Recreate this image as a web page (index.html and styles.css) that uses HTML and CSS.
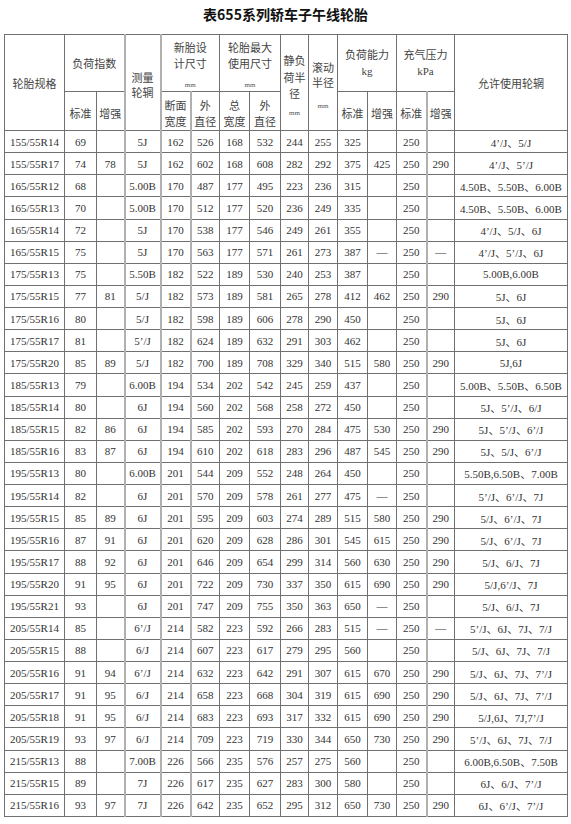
FILE: index.html
```html
<!DOCTYPE html>
<html lang="zh-CN">
<head>
<meta charset="utf-8">
<title>表655系列轿车子午线轮胎</title>
<link rel="stylesheet" href="styles.css">
</head>
<body>
<div class="page">
  <h1 class="title">表655系列轿车子午线轮胎</h1>
  <table class="tyre">
    <colgroup>
      <col class="c-spec"><col class="c-n32"><col class="c-n28"><col class="c-rim lt"><col class="c-w30 lt"><col class="c-w29 lt"><col class="c-w30"><col class="c-w31"><col class="c-w28"><col class="c-w29"><col class="c-w30"><col class="c-w29"><col class="c-w30"><col class="c-w28 lt"><col class="c-allow">
    </colgroup>
    <thead>
      <tr class="h1">
        <th rowspan="2" class="hd">轮胎规格</th>
        <th colspan="2" class="hd">负荷指数</th>
        <th rowspan="2" class="hd rimhd"><div class="stack l15"><span>测量</span><span>轮辋</span></div></th>
        <th colspan="2" class="hd top"><div class="stack l16"><span>新胎设</span><span>计尺寸</span><span class="mm">mm</span></div></th>
        <th colspan="2" class="hd top"><div class="stack l16"><span>轮胎最大</span><span>使用尺寸</span><span class="mm">mm</span></div></th>
        <th rowspan="2" class="hd top static"><div class="stack l165"><span>静负</span><span>荷半</span><span>径</span><span class="mm m5">mm</span></div></th>
        <th rowspan="2" class="hd top roll"><div class="stack l15"><span>滚动</span><span>半径</span><span class="mm m10">mm</span></div></th>
        <th colspan="2" class="hd"><div class="stack l17"><span>负荷能力</span><span class="unit">kg</span></div></th>
        <th colspan="2" class="hd"><div class="stack l17"><span>充气压力</span><span class="unit">kPa</span></div></th>
        <th rowspan="2" class="hd">允许使用轮辋</th>
      </tr>
      <tr class="h2">
        <th class="hd sub">标准</th>
        <th class="hd sub">增强</th>
        <th class="hd sub"><div class="stack l16"><span>断面</span><span>宽度</span></div></th>
        <th class="hd sub"><div class="stack l16"><span>外</span><span>直径</span></div></th>
        <th class="hd sub"><div class="stack l16"><span>总</span><span>宽度</span></div></th>
        <th class="hd sub"><div class="stack l16"><span>外</span><span>直径</span></div></th>
        <th class="hd sub">标准</th>
        <th class="hd sub">增强</th>
        <th class="hd sub">标准</th>
        <th class="hd sub">增强</th>
      </tr>
    </thead>
    <tbody>
      <tr><td>155/55R14</td><td>69</td><td></td><td>5J</td><td>162</td><td>526</td><td>168</td><td>532</td><td>244</td><td>255</td><td>325</td><td></td><td>250</td><td></td><td>4’/J、5/J</td></tr>
      <tr><td>155/55R17</td><td>74</td><td>78</td><td>5J</td><td>162</td><td>602</td><td>168</td><td>608</td><td>282</td><td>292</td><td>375</td><td>425</td><td>250</td><td>290</td><td>4’/J、5’/J</td></tr>
      <tr><td>165/55R12</td><td>68</td><td></td><td>5.00B</td><td>170</td><td>487</td><td>177</td><td>495</td><td>223</td><td>236</td><td>315</td><td></td><td>250</td><td></td><td>4.50B、5.50B、6.00B</td></tr>
      <tr><td>165/55R13</td><td>70</td><td></td><td>5.00B</td><td>170</td><td>512</td><td>177</td><td>520</td><td>236</td><td>249</td><td>335</td><td></td><td>250</td><td></td><td>4.50B、5.50B、6.00B</td></tr>
      <tr><td>165/55R14</td><td>72</td><td></td><td>5J</td><td>170</td><td>538</td><td>177</td><td>546</td><td>249</td><td>261</td><td>355</td><td></td><td>250</td><td></td><td>4’/J、5/J、6J</td></tr>
      <tr><td>165/55R15</td><td>75</td><td></td><td>5J</td><td>170</td><td>563</td><td>177</td><td>571</td><td>261</td><td>273</td><td>387</td><td>—</td><td>250</td><td>—</td><td>4’/J、5’/J、6J</td></tr>
      <tr><td>175/55R13</td><td>75</td><td></td><td>5.50B</td><td>182</td><td>522</td><td>189</td><td>530</td><td>240</td><td>253</td><td>387</td><td></td><td>250</td><td></td><td>5.00B,6.00B</td></tr>
      <tr><td>175/55R15</td><td>77</td><td>81</td><td>5/J</td><td>182</td><td>573</td><td>189</td><td>581</td><td>265</td><td>278</td><td>412</td><td>462</td><td>250</td><td>290</td><td>5J、6J</td></tr>
      <tr><td>175/55R16</td><td>80</td><td></td><td>5/J</td><td>182</td><td>598</td><td>189</td><td>606</td><td>278</td><td>290</td><td>450</td><td></td><td>250</td><td></td><td>5J、6J</td></tr>
      <tr><td>175/55R17</td><td>81</td><td></td><td>5’/J</td><td>182</td><td>624</td><td>189</td><td>632</td><td>291</td><td>303</td><td>462</td><td></td><td>250</td><td></td><td>5J、6J</td></tr>
      <tr><td>175/55R20</td><td>85</td><td>89</td><td>5/J</td><td>182</td><td>700</td><td>189</td><td>708</td><td>329</td><td>340</td><td>515</td><td>580</td><td>250</td><td>290</td><td>5J,6J</td></tr>
      <tr><td>185/55R13</td><td>79</td><td></td><td>6.00B</td><td>194</td><td>534</td><td>202</td><td>542</td><td>245</td><td>259</td><td>437</td><td></td><td>250</td><td></td><td>5.00B、5.50B、6.50B</td></tr>
      <tr><td>185/55R14</td><td>80</td><td></td><td>6J</td><td>194</td><td>560</td><td>202</td><td>568</td><td>258</td><td>272</td><td>450</td><td></td><td>250</td><td></td><td>5J、5’/J、6/J</td></tr>
      <tr><td>185/55R15</td><td>82</td><td>86</td><td>6J</td><td>194</td><td>585</td><td>202</td><td>593</td><td>270</td><td>284</td><td>475</td><td>530</td><td>250</td><td>290</td><td>5J、5’/J、6’/J</td></tr>
      <tr><td>185/55R16</td><td>83</td><td>87</td><td>6J</td><td>194</td><td>610</td><td>202</td><td>618</td><td>283</td><td>296</td><td>487</td><td>545</td><td>250</td><td>290</td><td>5J、5/J、6’/J</td></tr>
      <tr><td>195/55R13</td><td>80</td><td></td><td>6.00B</td><td>201</td><td>544</td><td>209</td><td>552</td><td>248</td><td>264</td><td>450</td><td></td><td>250</td><td></td><td>5.50B,6.50B、7.00B</td></tr>
      <tr><td>195/55R14</td><td>82</td><td></td><td>6J</td><td>201</td><td>570</td><td>209</td><td>578</td><td>261</td><td>277</td><td>475</td><td>—</td><td>250</td><td></td><td>5’/J、6’/J、7J</td></tr>
      <tr><td>195/55R15</td><td>85</td><td>89</td><td>6J</td><td>201</td><td>595</td><td>209</td><td>603</td><td>274</td><td>289</td><td>515</td><td>580</td><td>250</td><td>290</td><td>5/J、6’/J、7J</td></tr>
      <tr><td>195/55R16</td><td>87</td><td>91</td><td>6J</td><td>201</td><td>620</td><td>209</td><td>628</td><td>286</td><td>301</td><td>545</td><td>615</td><td>250</td><td>290</td><td>5/J、6’/J、7J</td></tr>
      <tr><td>195/55R17</td><td>88</td><td>92</td><td>6J</td><td>201</td><td>646</td><td>209</td><td>654</td><td>299</td><td>314</td><td>560</td><td>630</td><td>250</td><td>290</td><td>5/J、6/J、7J</td></tr>
      <tr><td>195/55R20</td><td>91</td><td>95</td><td>6J</td><td>201</td><td>722</td><td>209</td><td>730</td><td>337</td><td>350</td><td>615</td><td>690</td><td>250</td><td>290</td><td>5/J,6’/J、7J</td></tr>
      <tr><td>195/55R21</td><td>93</td><td></td><td>6J</td><td>201</td><td>747</td><td>209</td><td>755</td><td>350</td><td>363</td><td>650</td><td>—</td><td>250</td><td></td><td>5/J、6/J、7J</td></tr>
      <tr><td>205/55R14</td><td>85</td><td></td><td>6’/J</td><td>214</td><td>582</td><td>223</td><td>592</td><td>266</td><td>283</td><td>515</td><td>—</td><td>250</td><td>—</td><td>5’/J、6J、7J、7/J</td></tr>
      <tr><td>205/55R15</td><td>88</td><td></td><td>6/J</td><td>214</td><td>607</td><td>223</td><td>617</td><td>279</td><td>295</td><td>560</td><td></td><td>250</td><td></td><td>5/J、6J、7J、7/J</td></tr>
      <tr><td>205/55R16</td><td>91</td><td>94</td><td>6’/J</td><td>214</td><td>632</td><td>223</td><td>642</td><td>291</td><td>307</td><td>615</td><td>670</td><td>250</td><td>290</td><td>5/J、6J、7J、7’/J</td></tr>
      <tr><td>205/55R17</td><td>91</td><td>95</td><td>6/J</td><td>214</td><td>658</td><td>223</td><td>668</td><td>304</td><td>319</td><td>615</td><td>690</td><td>250</td><td>290</td><td>5/J、6J、7J、7’/J</td></tr>
      <tr><td>205/55R18</td><td>91</td><td>95</td><td>6/J</td><td>214</td><td>683</td><td>223</td><td>693</td><td>317</td><td>332</td><td>615</td><td>690</td><td>250</td><td>290</td><td>5/J,6J、7J,7’/J</td></tr>
      <tr><td>205/55R19</td><td>93</td><td>97</td><td>6/J</td><td>214</td><td>709</td><td>223</td><td>719</td><td>330</td><td>344</td><td>650</td><td>730</td><td>250</td><td>290</td><td>5’/J、6J、7J、7/J</td></tr>
      <tr><td>215/55R13</td><td>88</td><td></td><td>7.00B</td><td>226</td><td>566</td><td>235</td><td>576</td><td>257</td><td>275</td><td>560</td><td></td><td>250</td><td></td><td>6.00B,6.50B、7.50B</td></tr>
      <tr><td>215/55R15</td><td>89</td><td></td><td>7J</td><td>226</td><td>617</td><td>235</td><td>627</td><td>283</td><td>300</td><td>580</td><td></td><td>250</td><td></td><td>6J、6/J、7’/J</td></tr>
      <tr><td>215/55R16</td><td>93</td><td>97</td><td>7J</td><td>226</td><td>642</td><td>235</td><td>652</td><td>295</td><td>312</td><td>650</td><td>730</td><td>250</td><td>290</td><td>6J、6’/J、7’/J</td></tr>
    </tbody>
  </table>
</div>
</body>
</html>
```

FILE: styles.css
```css
html, body {
  margin: 0;
  padding: 0;
  background: #ffffff;
}

body {
  font-family: "Liberation Serif", "Noto Sans CJK SC", serif;
  color: #333333;
}

.page {
  padding: 0 4px;
}

.title {
  margin: 0;
  height: 34px;
  font-family: "Noto Sans CJK SC", sans-serif;
  font-weight: 700;
  font-size: 14px;
  line-height: 28px;
  text-align: center;
  color: #111111;
}

.tyre {
  border-collapse: collapse;
  table-layout: fixed;
  width: 563px;
  font-size: 11px;
  border: 1px solid #555555;
}

.c-spec { width: 60px; }
.c-n32 { width: 32px; }
.c-n28 { width: 28px; }
.c-rim { width: 36px; }
.c-w28 { width: 28px; }
.c-w29 { width: 29px; }
.c-w30 { width: 30px; }
.c-w31 { width: 31px; }
.c-allow { width: 113px; }

col.lt {
  border-left: 2px solid #b0b0b0;
}

.tyre th,
.tyre td {
  border: 1px solid #707070;
  padding: 0;
  text-align: center;
  vertical-align: middle;
  font-weight: normal;
  white-space: nowrap;
  overflow: hidden;
}

.tyre td {
  color: #333333;
}

.tyre tbody tr {
  height: 22.13px;
}

.tyre tr.h1 {
  height: 57px;
}

.tyre tr.h2 {
  height: 39px;
}

.hd {
  font-family: "Noto Sans CJK SC", sans-serif;
  font-size: 11px;
  line-height: 16px;
  color: #444444;
}

.hd.top {
  vertical-align: top;
  padding-top: 4px;
}

.hd.static {
  padding-top: 17px;
}

.hd.roll {
  padding-top: 25px;
}

.hd.rimhd {
  padding-top: 4px;
}

.hd.sub {
  padding-top: 4px;
}

.stack {
  display: flex;
  flex-direction: column;
  align-items: center;
}

.l15 { line-height: 15px; }
.l16 { line-height: 16px; }
.l165 { line-height: 16.5px; }
.l17 { line-height: 17px; }

.mm {
  font-family: "Liberation Serif", serif;
  font-size: 7px;
  line-height: 12px;
  margin-top: 8px;
  color: #555555;
}

.mm.m5 { margin-top: 5px; }
.mm.m10 { margin-top: 10px; }

.unit {
  font-family: "Liberation Serif", serif;
  font-size: 11px;
}
```
